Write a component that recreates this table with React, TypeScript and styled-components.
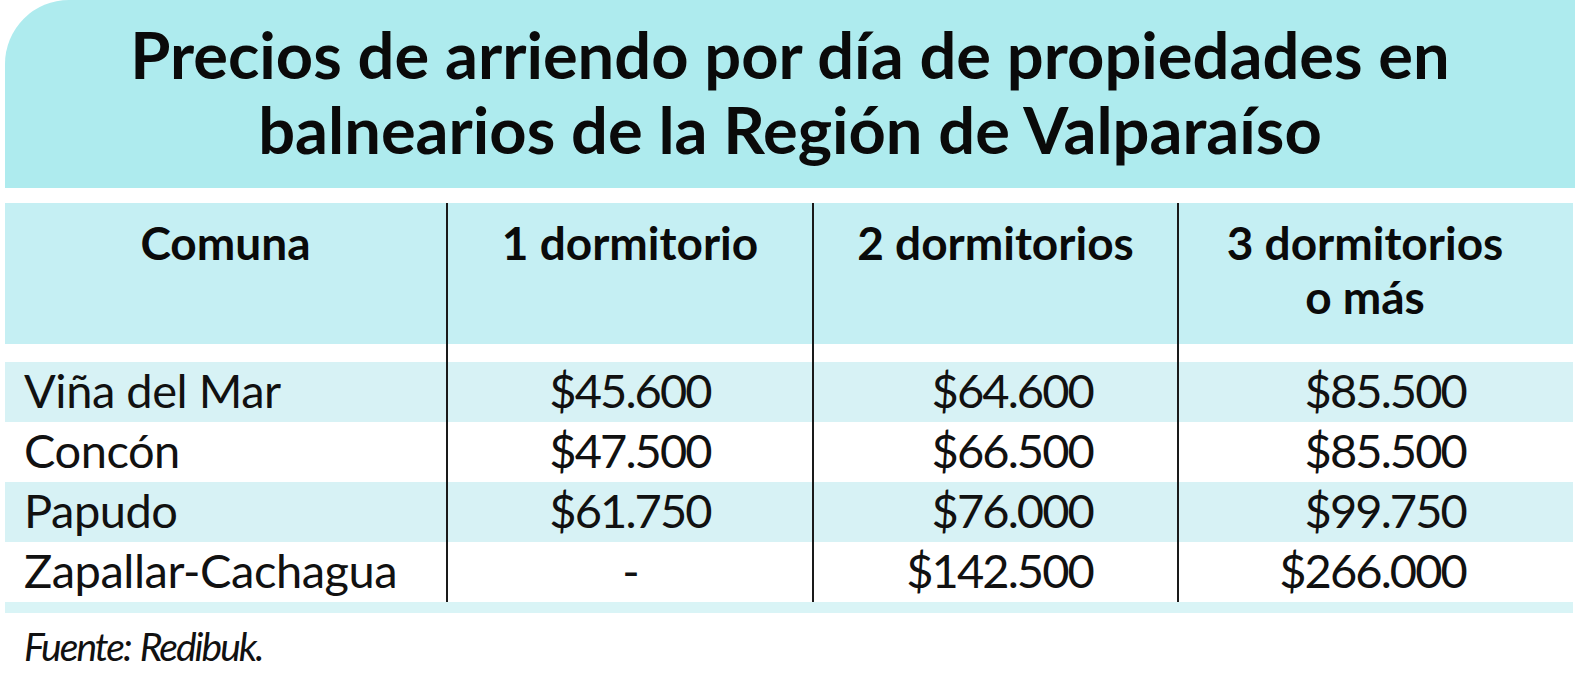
import styled, { createGlobalStyle } from "styled-components";

const GlobalStyle = createGlobalStyle`
  html, body {
    margin: 0;
    padding: 0;
    background: #ffffff;
  }
  body {
    font-family: Lato, "Open Sans", "Liberation Sans", sans-serif;
    color: #111111;
  }
`;

type Align = "left" | "center" | "right";

type Column = {
  title: string[];
  width: number;
  align: Align;
  padLeft: number;
  padRight: number;
  headPadRight: number;
  values: string[];
};

const columns: Column[] = [
  {
    title: ["Comuna"],
    width: 441,
    align: "left",
    padLeft: 19,
    padRight: 0,
    headPadRight: 0,
    values: ["Viña del Mar", "Concón", "Papudo", "Zapallar-Cachagua"],
  },
  {
    title: ["1 dormitorio"],
    width: 366,
    align: "center",
    padLeft: 0,
    padRight: 0,
    headPadRight: 0,
    values: ["$45.600", "$47.500", "$61.750", "-"],
  },
  {
    title: ["2 dormitorios"],
    width: 365,
    align: "right",
    padLeft: 0,
    padRight: 84,
    headPadRight: 0,
    values: ["$64.600", "$66.500", "$76.000", "$142.500"],
  },
  {
    title: ["3 dormitorios", "o más"],
    width: 396,
    align: "right",
    padLeft: 0,
    padRight: 107,
    headPadRight: 22,
    values: ["$85.500", "$85.500", "$99.750", "$266.000"],
  },
];

export default () => {
  return (
    <>
      <GlobalStyle />
      <Page>
        <TitlePanel>
          <Title>
            Precios de arriendo por día de propiedades en
            <br />
            balnearios de la Región de Valparaíso
          </Title>
        </TitlePanel>
        <Table>
          {columns.map((col, ci) => (
            <TableColumn key={ci} $width={col.width} $divider={ci > 0}>
              <HeaderCell $padRight={col.headPadRight}>
                {col.title.map((t) => (
                  <span key={t}>{t}</span>
                ))}
              </HeaderCell>
              <Spacer />
              {col.values.map((v, ri) => (
                <Cell
                  key={ri}
                  $striped={ri % 2 === 0}
                  $align={col.align}
                  $padLeft={col.padLeft}
                  $padRight={col.padRight}
                  $numeric={ci > 0}
                >
                  {v}
                </Cell>
              ))}
            </TableColumn>
          ))}
        </Table>
        <BottomStripe />
        <Source>Fuente: Redibuk.</Source>
      </Page>
    </>
  );
};

const Page = styled.main`
  width: 1590px;
  height: 676px;
  box-sizing: border-box;
  padding-left: 5px;
  display: flex;
  flex-direction: column;
  overflow: hidden;
`;

const TitlePanel = styled.header`
  width: 1570px;
  height: 188px;
  box-sizing: border-box;
  padding-top: 17px;
  background-color: #aeebee;
  border-top-left-radius: 64px;
  display: flex;
  justify-content: center;
`;

const Title = styled.h1`
  margin: 0;
  font-family: Lato, "Open Sans", "Liberation Sans", sans-serif;
  font-weight: 700;
  font-size: 65px;
  line-height: 75px;
  text-align: center;
  color: #0a0a0a;
`;

const Table = styled.section`
  margin-top: 15px;
  display: flex;
  width: 1568px;
`;

const TableColumn = styled.div<{ $width: number; $divider: boolean }>`
  width: ${(p) => p.$width}px;
  box-sizing: border-box;
  display: flex;
  flex-direction: column;
  border-left: ${(p) => (p.$divider ? "2px solid #1a1a1a" : "none")};
`;

const HeaderCell = styled.div<{ $padRight: number }>`
  height: 141px;
  box-sizing: border-box;
  padding-top: 13px;
  padding-right: ${(p) => p.$padRight}px;
  background-color: #c5eff3;
  display: flex;
  flex-direction: column;
  align-items: center;
  font-weight: 700;
  font-size: 46px;
  line-height: 54px;
  color: #0a0a0a;
`;

const Spacer = styled.div`
  height: 18px;
  background-color: #ffffff;
`;

const Cell = styled.div<{
  $striped: boolean;
  $align: Align;
  $padLeft: number;
  $padRight: number;
  $numeric: boolean;
}>`
  height: 60px;
  box-sizing: border-box;
  padding-left: ${(p) => p.$padLeft}px;
  padding-right: ${(p) => p.$padRight}px;
  background-color: ${(p) => (p.$striped ? "#d7f2f5" : "#ffffff")};
  text-align: ${(p) => p.$align};
  font-weight: 400;
  font-size: 47px;
  line-height: 56px;
  letter-spacing: ${(p) => (p.$numeric ? "-0.04em" : "-0.01em")};
  white-space: nowrap;
`;

const BottomStripe = styled.div`
  width: 1568px;
  height: 11px;
  background-color: #d9f4f6;
`;

const Source = styled.p`
  margin: 10px 0 0 19px;
  font-style: italic;
  font-size: 39px;
  line-height: 46px;
  letter-spacing: -2px;
  word-spacing: 2px;
`;
